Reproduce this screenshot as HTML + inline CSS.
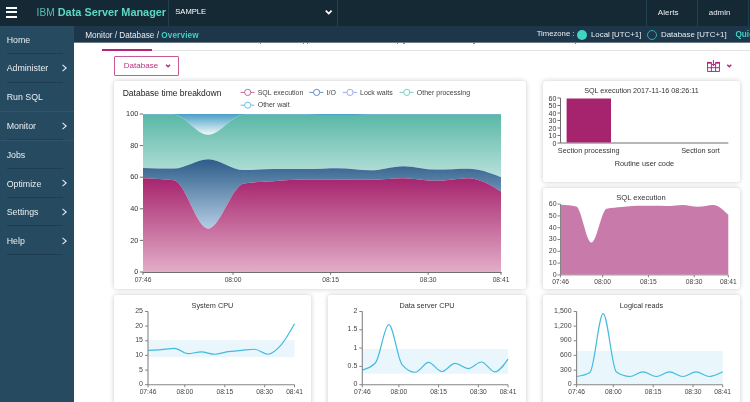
<!DOCTYPE html>
<html><head><meta charset="utf-8"><title>IBM Data Server Manager</title>
<style>
html,body{margin:0;padding:0}
body{width:750px;height:402px;overflow:hidden;background:#fff;font-family:"Liberation Sans", sans-serif;position:relative}
.abs{position:absolute}
#top{left:0;top:0;width:750px;height:26px;background:#152935}
#side{left:0;top:26px;width:74px;height:376px;background:#264a60}
#crumb{left:74px;top:26px;width:676px;height:16px;background:#1d3649}
.card{position:absolute;background:#fff;border-radius:3px;box-shadow:0 0 5px rgba(0,0,0,0.22)}
.nav{position:absolute;left:6.7px;color:#e8eef2;font-size:8.8px;line-height:10px;white-space:nowrap}
.sep{position:absolute;left:7px;width:56px;height:1px;background:#1e3d51}
.sepf{position:absolute;left:0;width:74px;height:1px;background:#31546a}
.vsep{position:absolute;top:0;width:1px;height:26px;background:#21404f}
.t{position:absolute;white-space:nowrap;line-height:10px}
svg text{font-family:"Liberation Sans", sans-serif}
</style></head><body>
<div id="wrap" style="position:absolute;left:0;top:0;width:750px;height:402px;overflow:hidden;will-change:transform">
<div class="abs" id="top"></div>
<div class="abs" id="side"></div>
<div class="abs" id="crumb"></div>
<div class="abs" style="left:74px;top:42px;width:676px;height:1px;background:#6c7c89"></div>

<!-- hamburger -->
<div class="abs" style="left:5.5px;top:6.7px;width:11.7px;height:2.3px;background:#fff"></div>
<div class="abs" style="left:5.5px;top:10.9px;width:11.7px;height:2.5px;background:#fff"></div>
<div class="abs" style="left:5.5px;top:15.5px;width:11.7px;height:2.5px;background:#fff"></div>

<div class="t" style="left:36.6px;top:5.9px;font-size:10.9px;line-height:12px;color:#5dd8c3"><span style="font-size:10.2px;color:#55bfb0">IBM</span> <b>Data Server Manager</b></div>
<div class="vsep" style="left:168px"></div>
<div class="t" style="left:175.3px;top:7.3px;font-size:7.6px;color:#fff">SAMPLE</div>
<svg class="abs" style="left:324px;top:8px" width="10" height="9" viewBox="0 0 10 9"><path d="M1.8,2.7L4.7,5.6L7.6,2.7" fill="none" stroke="#fff" stroke-width="1.7"/></svg>
<div class="vsep" style="left:337px"></div>
<div class="vsep" style="left:646px"></div>
<div class="vsep" style="left:697px"></div>
<div class="vsep" style="left:748px"></div>
<div class="t" style="left:657.8px;top:7.9px;font-size:8.1px;color:#e8eef2">Alerts</div>
<div class="t" style="left:708.8px;top:7.9px;font-size:7.9px;color:#e8eef2">admin</div>

<!-- breadcrumb -->
<div class="t" style="left:85.2px;top:31.2px;font-size:8.2px;color:#e8eef2">Monitor / Database / <b style="color:#3fd0c0;letter-spacing:0.15px">Overview</b></div>
<div class="t" style="left:536.7px;top:29.2px;font-size:7.7px;color:#e8eef2">Timezone :</div>
<div class="abs" style="left:577px;top:29.6px;width:10.2px;height:10.2px;border-radius:50%;background:#40d5c3"></div>
<div class="t" style="left:591px;top:30.2px;font-size:7.85px;color:#e8eef2">Local [UTC+1]</div>
<div class="abs" style="left:646.6px;top:29.8px;width:8.4px;height:8.4px;border-radius:50%;border:1px solid #2fae9f"></div>
<div class="t" style="left:661px;top:30.2px;font-size:7.9px;color:#e8eef2">Database [UTC+1]</div>
<div class="t" style="left:735.5px;top:29.8px;font-size:8.2px;color:#3fd0c0;font-weight:bold">Quick</div>

<!-- sidebar -->
<div class="nav" style="top:34.5px">Home</div><div class="nav" style="top:63.3px">Administer</div><div class="nav" style="top:92.1px">Run SQL</div><div class="nav" style="top:120.9px">Monitor</div><div class="nav" style="top:149.7px">Jobs</div><div class="nav" style="top:178.5px">Optimize</div><div class="nav" style="top:207.3px">Settings</div><div class="nav" style="top:236.1px">Help</div>
<div class="sep" style="top:53px"></div><div class="sep" style="top:82px"></div><div class="sep" style="top:168px"></div><div class="sep" style="top:197px"></div><div class="sep" style="top:225px"></div><div class="sep" style="top:254px"></div>
<div class="sepf" style="top:111px"></div><div class="sepf" style="top:140px"></div><div class="sep" style="top:139px"></div>
<svg class="abs" style="left:61px;top:64.1px" width="7" height="8" viewBox="0 0 7 8"><path d="M1.5,0.9L5.2,4L1.5,7.1" fill="none" stroke="#e8eef2" stroke-width="1.05"/></svg><svg class="abs" style="left:61px;top:121.7px" width="7" height="8" viewBox="0 0 7 8"><path d="M1.5,0.9L5.2,4L1.5,7.1" fill="none" stroke="#e8eef2" stroke-width="1.05"/></svg><svg class="abs" style="left:61px;top:179.3px" width="7" height="8" viewBox="0 0 7 8"><path d="M1.5,0.9L5.2,4L1.5,7.1" fill="none" stroke="#e8eef2" stroke-width="1.05"/></svg><svg class="abs" style="left:61px;top:208.1px" width="7" height="8" viewBox="0 0 7 8"><path d="M1.5,0.9L5.2,4L1.5,7.1" fill="none" stroke="#e8eef2" stroke-width="1.05"/></svg><svg class="abs" style="left:61px;top:236.9px" width="7" height="8" viewBox="0 0 7 8"><path d="M1.5,0.9L5.2,4L1.5,7.1" fill="none" stroke="#e8eef2" stroke-width="1.05"/></svg>

<!-- clipped marks -->
<div class="abs" style="left:259.5px;top:43px;width:1.5px;height:1px;background:#7f8b95"></div><div class="abs" style="left:302.5px;top:43px;width:1.5px;height:1px;background:#7f8b95"></div><div class="abs" style="left:306.5px;top:43px;width:1.5px;height:1px;background:#7f8b95"></div><div class="abs" style="left:396.5px;top:43px;width:1.5px;height:1px;background:#7f8b95"></div><div class="abs" style="left:403px;top:43px;width:1.5px;height:1px;background:#7f8b95"></div><div class="abs" style="left:473px;top:43px;width:1.5px;height:1px;background:#7f8b95"></div><div class="abs" style="left:574.5px;top:43px;width:1.5px;height:1px;background:#7f8b95"></div>
<!-- tabs line -->
<div class="abs" style="left:102px;top:49.6px;width:648px;height:1px;background:#e3e3e3"></div>
<div class="abs" style="left:102px;top:48.6px;width:50px;height:2px;background:#b5267b"></div>

<!-- database button -->
<div class="abs" style="left:114px;top:56px;width:63px;height:18px;border:1px solid #c85a98;border-radius:1px"></div>
<div class="t" style="left:123.8px;top:61px;font-size:8.05px;color:#b9307f">Database</div>
<svg class="abs" style="left:164px;top:62px" width="8" height="8" viewBox="0 0 8 8"><path d="M2.1,2.7L4.1,4.8L6.1,2.7" fill="none" stroke="#b5267b" stroke-width="1.3"/></svg>

<!-- layout icon -->
<svg class="abs" style="left:700px;top:54px" width="40" height="24" viewBox="0 0 40 24">
<g fill="none" stroke="#b0207a" stroke-width="0.95">
<path d="M11.4,8.6H7.55V17.45H19.45V8.6H15.6"/>
<path d="M7.6,13.7H19.4M11.4,8.6V17.4M15.6,8.6V17.4"/>
</g>
<rect x="7.1" y="7.9" width="4.3" height="1.7" fill="#b0207a"/>
<rect x="15.6" y="7.9" width="4.3" height="1.7" fill="#b0207a"/>
<path d="M13.45,6V11.6M11.9,9.9L13.45,11.7L15,9.9" fill="none" stroke="#b0207a" stroke-width="1"/>
<path d="M27.3,10.7L29.3,12.8L31.3,10.7" fill="none" stroke="#b0207a" stroke-width="1.3"/>
</svg>

<!-- cards -->
<div class="card" style="left:114px;top:81px;width:412px;height:208px"></div>
<div class="card" style="left:543px;top:81px;width:197px;height:101px"></div>
<div class="card" style="left:543px;top:188px;width:197px;height:101px"></div>
<div class="card" style="left:114px;top:295px;width:197px;height:120px"></div>
<div class="card" style="left:328px;top:295px;width:198px;height:120px"></div>
<div class="card" style="left:543px;top:295px;width:197px;height:120px"></div>

<svg class="abs" style="left:0;top:0" width="750" height="402" viewBox="0 0 750 402">
<defs>
<linearGradient id="gsql" x1="0" y1="0" x2="0" y2="1"><stop offset="0" stop-color="#a6246e"/><stop offset="1" stop-color="#e3adc8"/></linearGradient>
<linearGradient id="gio" x1="0" y1="0" x2="0" y2="1"><stop offset="0" stop-color="#2c5c88"/><stop offset="1" stop-color="#b4cde4"/></linearGradient>
<linearGradient id="gop" x1="0" y1="0" x2="0" y2="1"><stop offset="0" stop-color="#5ab8a6"/><stop offset="1" stop-color="#b9e1db"/></linearGradient>
<linearGradient id="gow" x1="0" y1="0" x2="0" y2="1"><stop offset="0" stop-color="#4a9fc6"/><stop offset="1" stop-color="#f2f9fc"/></linearGradient>
</defs>
<path d="M143.00,114.00C153.31,114.00,163.61,114.00,173.92,114.00C185.31,114.00,196.70,114.00,208.09,114.00C220.02,114.00,231.96,114.00,243.89,114.00C253.65,114.00,263.42,114.00,273.18,114.00C284.03,114.00,294.88,114.00,305.73,114.00C316.58,114.00,327.42,114.00,338.27,114.00C349.12,114.00,359.97,114.00,370.82,114.00C381.67,114.00,392.52,114.00,403.36,114.00C414.21,114.00,425.06,114.00,435.91,114.00C446.76,114.00,457.61,114.00,468.45,114.00C479.30,114.00,490.15,114.00,501.00,114.00L501.00,114.79C490.15,114.79,479.30,114.79,468.45,114.79C457.61,114.79,446.76,114.79,435.91,114.79C425.06,114.79,414.21,114.79,403.36,114.79C392.52,114.79,381.67,114.79,370.82,114.79C359.97,114.79,349.12,115.11,338.27,115.11C327.42,115.11,316.58,114.79,305.73,114.79C294.88,114.79,284.03,114.79,273.18,114.79C263.42,114.79,253.65,114.79,243.89,114.79C231.96,114.79,220.02,134.86,208.09,134.86C196.70,134.86,185.31,114.79,173.92,114.79C163.61,114.79,153.31,114.79,143.00,114.79Z" fill="url(#gow)"/>
<path d="M143.00,114.79C153.31,114.79,163.61,114.79,173.92,114.79C185.31,114.79,196.70,134.86,208.09,134.86C220.02,134.86,231.96,114.79,243.89,114.79C253.65,114.79,263.42,114.79,273.18,114.79C284.03,114.79,294.88,114.79,305.73,114.79C316.58,114.79,327.42,115.11,338.27,115.11C349.12,115.11,359.97,114.79,370.82,114.79C381.67,114.79,392.52,114.79,403.36,114.79C414.21,114.79,425.06,114.79,435.91,114.79C446.76,114.79,457.61,114.79,468.45,114.79C479.30,114.79,490.15,114.79,501.00,114.79L501.00,177.20C490.15,173.01,479.30,168.83,468.45,168.83C457.61,168.83,446.76,169.62,435.91,169.62C425.06,169.62,414.21,166.14,403.36,166.14C392.52,166.14,381.67,170.25,370.82,170.25C359.97,170.25,349.12,168.19,338.27,168.19C327.42,168.19,316.58,168.98,305.73,168.98C294.88,168.98,284.03,168.98,273.18,168.98C263.42,168.98,253.65,170.09,243.89,170.09C231.96,170.09,220.02,159.19,208.09,159.19C196.70,159.19,185.31,168.51,173.92,168.51C163.61,168.51,153.31,168.19,143.00,167.88Z" fill="url(#gop)"/>
<path d="M143.00,167.88C153.31,168.19,163.61,168.51,173.92,168.51C185.31,168.51,196.70,159.19,208.09,159.19C220.02,159.19,231.96,170.09,243.89,170.09C253.65,170.09,263.42,168.98,273.18,168.98C284.03,168.98,294.88,168.98,305.73,168.98C316.58,168.98,327.42,168.19,338.27,168.19C349.12,168.19,359.97,170.25,370.82,170.25C381.67,170.25,392.52,166.14,403.36,166.14C414.21,166.14,425.06,169.62,435.91,169.62C446.76,169.62,457.61,168.83,468.45,168.83C479.30,168.83,490.15,173.01,501.00,177.20L501.00,191.42C490.15,184.86,479.30,178.31,468.45,178.31C457.61,178.31,446.76,180.83,435.91,180.83C425.06,180.83,414.21,178.31,403.36,178.31C392.52,178.31,381.67,179.73,370.82,179.73C359.97,179.73,349.12,179.41,338.27,179.41C327.42,179.41,316.58,179.46,305.73,179.57C294.88,179.68,284.03,180.44,273.18,181.15C263.42,181.79,253.65,181.94,243.89,183.52C231.96,185.45,220.02,228.71,208.09,228.71C196.70,228.71,185.31,181.99,173.92,180.36C163.61,178.89,153.31,178.52,143.00,178.15Z" fill="url(#gio)"/>
<path d="M143.00,178.15C153.31,178.52,163.61,178.89,173.92,180.36C185.31,181.99,196.70,228.71,208.09,228.71C220.02,228.71,231.96,185.45,243.89,183.52C253.65,181.94,263.42,181.79,273.18,181.15C284.03,180.44,294.88,179.68,305.73,179.57C316.58,179.46,327.42,179.41,338.27,179.41C349.12,179.41,359.97,179.73,370.82,179.73C381.67,179.73,392.52,178.31,403.36,178.31C414.21,178.31,425.06,180.83,435.91,180.83C446.76,180.83,457.61,178.31,468.45,178.31C479.30,178.31,490.15,184.86,501.00,191.42L501.00,272.00C490.15,272.00,479.30,272.00,468.45,272.00C457.61,272.00,446.76,272.00,435.91,272.00C425.06,272.00,414.21,272.00,403.36,272.00C392.52,272.00,381.67,272.00,370.82,272.00C359.97,272.00,349.12,272.00,338.27,272.00C327.42,272.00,316.58,272.00,305.73,272.00C294.88,272.00,284.03,272.00,273.18,272.00C263.42,272.00,253.65,272.00,243.89,272.00C231.96,272.00,220.02,272.00,208.09,272.00C196.70,272.00,185.31,272.00,173.92,272.00C163.61,272.00,153.31,272.00,143.00,272.00Z" fill="url(#gsql)"/>
<path d="M142.5,272.5H501.5" stroke="#6e6e6e" stroke-width="1" fill="none"/>
<path d="M143.0,272.0v2.8" stroke="#6e6e6e" stroke-width="1"/>
<text x="143.0" y="282.2" font-size="6.7" text-anchor="middle" fill="#444" font-weight="normal" >07:46</text>
<path d="M233.0,272.0v2.8" stroke="#6e6e6e" stroke-width="1"/>
<text x="233.0" y="282.2" font-size="6.7" text-anchor="middle" fill="#444" font-weight="normal" >08:00</text>
<path d="M330.6,272.0v2.8" stroke="#6e6e6e" stroke-width="1"/>
<text x="330.6" y="282.2" font-size="6.7" text-anchor="middle" fill="#444" font-weight="normal" >08:15</text>
<path d="M428.2,272.0v2.8" stroke="#6e6e6e" stroke-width="1"/>
<text x="428.2" y="282.2" font-size="6.7" text-anchor="middle" fill="#444" font-weight="normal" >08:30</text>
<path d="M501.0,272.0v2.8" stroke="#6e6e6e" stroke-width="1"/>
<text x="501.0" y="282.2" font-size="6.7" text-anchor="middle" fill="#444" font-weight="normal" >08:41</text>
<path d="M139.8,272.0h3.2" stroke="#6e6e6e" stroke-width="1"/>
<text x="138.3" y="274.2" font-size="7.3" text-anchor="end" fill="#333" font-weight="normal" >0</text>
<path d="M139.8,240.4h3.2" stroke="#6e6e6e" stroke-width="1"/>
<text x="138.3" y="242.6" font-size="7.3" text-anchor="end" fill="#333" font-weight="normal" >20</text>
<path d="M139.8,208.8h3.2" stroke="#6e6e6e" stroke-width="1"/>
<text x="138.3" y="211.0" font-size="7.3" text-anchor="end" fill="#333" font-weight="normal" >40</text>
<path d="M139.8,177.2h3.2" stroke="#6e6e6e" stroke-width="1"/>
<text x="138.3" y="179.4" font-size="7.3" text-anchor="end" fill="#333" font-weight="normal" >60</text>
<path d="M139.8,145.6h3.2" stroke="#6e6e6e" stroke-width="1"/>
<text x="138.3" y="147.8" font-size="7.3" text-anchor="end" fill="#333" font-weight="normal" >80</text>
<path d="M139.8,114.0h3.2" stroke="#6e6e6e" stroke-width="1"/>
<text x="138.3" y="116.2" font-size="7.3" text-anchor="end" fill="#333" font-weight="normal" >100</text>
<text x="122.7" y="95.8" font-size="8.5" text-anchor="start" fill="#222" font-weight="normal" >Database time breakdown</text>
<path d="M240.5,92.4h14" stroke="#c25590" stroke-width="0.9"/><circle cx="247.7" cy="92.4" r="3.1" fill="#fff" stroke="#c25590" stroke-width="0.9"/>
<text x="257.7" y="95.0" font-size="7" text-anchor="start" fill="#444" font-weight="normal" >SQL execution</text>
<path d="M309.4,92.4h14" stroke="#4f84b5" stroke-width="0.9"/><circle cx="316.59999999999997" cy="92.4" r="3.1" fill="#fff" stroke="#4f84b5" stroke-width="0.9"/>
<text x="326.59999999999997" y="95.0" font-size="7" text-anchor="start" fill="#444" font-weight="normal" >I/O</text>
<path d="M342.8,92.4h14" stroke="#8f9ff5" stroke-width="0.9"/><circle cx="350.0" cy="92.4" r="3.1" fill="#fff" stroke="#8f9ff5" stroke-width="0.9"/>
<text x="360.0" y="95.0" font-size="7" text-anchor="start" fill="#444" font-weight="normal" >Lock waits</text>
<path d="M399.6,92.4h14" stroke="#6cc7b8" stroke-width="0.9"/><circle cx="406.8" cy="92.4" r="3.1" fill="#fff" stroke="#6cc7b8" stroke-width="0.9"/>
<text x="416.8" y="95.0" font-size="7" text-anchor="start" fill="#444" font-weight="normal" >Other processing</text>
<path d="M240.5,105.2h14" stroke="#62b6dc" stroke-width="0.9"/><circle cx="247.7" cy="105.2" r="3.1" fill="#fff" stroke="#62b6dc" stroke-width="0.9"/>
<text x="257.7" y="107.10000000000001" font-size="7" text-anchor="start" fill="#444" font-weight="normal" >Other wait</text>
<path d="M560.5,98.0V143.0H728.3" stroke="#6e6e6e" stroke-width="1" fill="none"/>
<path d="M557.5,143.0h3" stroke="#6e6e6e" stroke-width="1"/>
<text x="556.4" y="145.5" font-size="7" text-anchor="end" fill="#333" font-weight="normal" >0</text>
<path d="M557.5,135.5h3" stroke="#6e6e6e" stroke-width="1"/>
<text x="556.4" y="138.0" font-size="7" text-anchor="end" fill="#333" font-weight="normal" >10</text>
<path d="M557.5,128.0h3" stroke="#6e6e6e" stroke-width="1"/>
<text x="556.4" y="130.5" font-size="7" text-anchor="end" fill="#333" font-weight="normal" >20</text>
<path d="M557.5,120.5h3" stroke="#6e6e6e" stroke-width="1"/>
<text x="556.4" y="123.0" font-size="7" text-anchor="end" fill="#333" font-weight="normal" >30</text>
<path d="M557.5,113.0h3" stroke="#6e6e6e" stroke-width="1"/>
<text x="556.4" y="115.5" font-size="7" text-anchor="end" fill="#333" font-weight="normal" >40</text>
<path d="M557.5,105.5h3" stroke="#6e6e6e" stroke-width="1"/>
<text x="556.4" y="108.0" font-size="7" text-anchor="end" fill="#333" font-weight="normal" >50</text>
<path d="M557.5,98.0h3" stroke="#6e6e6e" stroke-width="1"/>
<text x="556.4" y="100.5" font-size="7" text-anchor="end" fill="#333" font-weight="normal" >60</text>
<rect x="566.6" y="98.5" width="44.4" height="44.0" fill="#a6246e"/>
<text x="641.5" y="93.4" font-size="7.2" text-anchor="middle" fill="#333" font-weight="normal" >SQL execution 2017-11-16 08:26:11</text>
<text x="588.7" y="153.2" font-size="7.3" text-anchor="middle" fill="#333" font-weight="normal" >Section processing</text>
<text x="700.5" y="153.2" font-size="7.3" text-anchor="middle" fill="#333" font-weight="normal" >Section sort</text>
<text x="644.4" y="166.4" font-size="7.3" text-anchor="middle" fill="#333" font-weight="normal" >Routine user code</text>
<path d="M560.5,204.1V274.9H728.3" stroke="#858585" stroke-width="1" fill="none"/>
<path d="M561.00,204.81C566.07,205.08,571.14,205.36,576.21,206.46C581.28,207.56,586.35,242.57,591.42,242.57C596.49,242.57,601.56,210.00,606.63,208.82C611.70,207.64,616.77,207.54,621.84,207.05C626.91,206.56,631.98,205.95,637.05,205.87C642.12,205.79,647.18,205.75,652.25,205.75C657.32,205.75,662.39,205.99,667.46,205.99C672.53,205.99,677.60,204.93,682.67,204.93C687.74,204.93,692.81,206.81,697.88,206.81C702.95,206.81,708.02,204.93,713.09,204.93C718.16,204.93,723.23,209.82,728.30,214.72L728.3,274.59999999999997L561.0,274.59999999999997Z" fill="#c87baa"/>
<path d="M557.5,274.9h3" stroke="#858585" stroke-width="1"/>
<text x="556.6" y="276.8" font-size="7" text-anchor="end" fill="#444" font-weight="normal" >0</text>
<path d="M557.5,263.1h3" stroke="#858585" stroke-width="1"/>
<text x="556.6" y="265.0" font-size="7" text-anchor="end" fill="#444" font-weight="normal" >10</text>
<path d="M557.5,251.3h3" stroke="#858585" stroke-width="1"/>
<text x="556.6" y="253.2" font-size="7" text-anchor="end" fill="#444" font-weight="normal" >20</text>
<path d="M557.5,239.5h3" stroke="#858585" stroke-width="1"/>
<text x="556.6" y="241.4" font-size="7" text-anchor="end" fill="#444" font-weight="normal" >30</text>
<path d="M557.5,227.7h3" stroke="#858585" stroke-width="1"/>
<text x="556.6" y="229.6" font-size="7" text-anchor="end" fill="#444" font-weight="normal" >40</text>
<path d="M557.5,215.9h3" stroke="#858585" stroke-width="1"/>
<text x="556.6" y="217.8" font-size="7" text-anchor="end" fill="#444" font-weight="normal" >50</text>
<path d="M557.5,204.1h3" stroke="#858585" stroke-width="1"/>
<text x="556.6" y="206.0" font-size="7" text-anchor="end" fill="#444" font-weight="normal" >60</text>
<path d="M560.5,274.9v2.4" stroke="#858585" stroke-width="1"/>
<text x="560.5" y="284.4" font-size="6.7" text-anchor="middle" fill="#444" font-weight="normal" >07:46</text>
<path d="M602.7,274.9v2.4" stroke="#858585" stroke-width="1"/>
<text x="602.7" y="284.4" font-size="6.7" text-anchor="middle" fill="#444" font-weight="normal" >08:00</text>
<path d="M648.4,274.9v2.4" stroke="#858585" stroke-width="1"/>
<text x="648.4" y="284.4" font-size="6.7" text-anchor="middle" fill="#444" font-weight="normal" >08:15</text>
<path d="M694.2,274.9v2.4" stroke="#858585" stroke-width="1"/>
<text x="694.2" y="284.4" font-size="6.7" text-anchor="middle" fill="#444" font-weight="normal" >08:30</text>
<path d="M728.3,274.9v2.4" stroke="#858585" stroke-width="1"/>
<text x="728.3" y="284.4" font-size="6.7" text-anchor="middle" fill="#444" font-weight="normal" >08:41</text>
<text x="641" y="200.0" font-size="7.6" text-anchor="middle" fill="#333" font-weight="normal" >SQL execution</text>
<rect x="148" y="340.2" width="146.5" height="17.0" fill="#e9f6fc"/>
<path d="M148.00,350.44C152.44,350.17,156.88,349.91,161.32,349.56C165.76,349.22,170.20,348.39,174.64,348.39C179.08,348.39,183.52,353.66,187.95,353.66C192.39,353.66,196.83,351.91,201.27,351.91C205.71,351.91,210.15,354.25,214.59,354.25C219.03,354.25,223.47,352.25,227.91,351.61C232.35,350.98,236.79,350.83,241.23,350.44C245.67,350.05,250.11,349.27,254.55,349.27C258.98,349.27,263.42,354.25,267.86,354.25C272.30,354.25,276.74,349.95,281.18,344.88C285.62,339.80,290.06,331.80,294.50,323.80" fill="none" stroke="#43bae0" stroke-width="1.2"/>
<path d="M148,311.5V384.7H294.5" stroke="#858585" stroke-width="1.1" fill="none"/>
<path d="M145,384.7h3" stroke="#858585" stroke-width="1"/>
<text x="143.0" y="386.3" font-size="7" text-anchor="end" fill="#444" font-weight="normal" >0</text>
<path d="M145,370.1h3" stroke="#858585" stroke-width="1"/>
<text x="143.0" y="371.7" font-size="7" text-anchor="end" fill="#444" font-weight="normal" >5</text>
<path d="M145,355.4h3" stroke="#858585" stroke-width="1"/>
<text x="143.0" y="357.0" font-size="7" text-anchor="end" fill="#444" font-weight="normal" >10</text>
<path d="M145,340.8h3" stroke="#858585" stroke-width="1"/>
<text x="143.0" y="342.4" font-size="7" text-anchor="end" fill="#444" font-weight="normal" >15</text>
<path d="M145,326.1h3" stroke="#858585" stroke-width="1"/>
<text x="143.0" y="327.7" font-size="7" text-anchor="end" fill="#444" font-weight="normal" >20</text>
<path d="M145,311.5h3" stroke="#858585" stroke-width="1"/>
<text x="143.0" y="313.1" font-size="7" text-anchor="end" fill="#444" font-weight="normal" >25</text>
<path d="M148.0,384.7v2.6" stroke="#858585" stroke-width="1"/>
<text x="148.0" y="393.7" font-size="6.7" text-anchor="middle" fill="#444" font-weight="normal" >07:46</text>
<path d="M184.8,384.7v2.6" stroke="#858585" stroke-width="1"/>
<text x="184.8" y="393.7" font-size="6.7" text-anchor="middle" fill="#444" font-weight="normal" >08:00</text>
<path d="M224.8,384.7v2.6" stroke="#858585" stroke-width="1"/>
<text x="224.8" y="393.7" font-size="6.7" text-anchor="middle" fill="#444" font-weight="normal" >08:15</text>
<path d="M264.7,384.7v2.6" stroke="#858585" stroke-width="1"/>
<text x="264.7" y="393.7" font-size="6.7" text-anchor="middle" fill="#444" font-weight="normal" >08:30</text>
<path d="M294.5,384.7v2.6" stroke="#858585" stroke-width="1"/>
<text x="294.5" y="393.7" font-size="6.7" text-anchor="middle" fill="#444" font-weight="normal" >08:41</text>
<text x="212.5" y="307.8" font-size="7.3" text-anchor="middle" fill="#333" font-weight="normal" >System CPU</text>
<rect x="362.3" y="349.0" width="145.7" height="24.7" fill="#e9f6fc"/>
<path d="M362.30,370.06C366.72,368.84,371.13,367.62,375.55,362.74C379.96,357.86,384.38,324.68,388.79,324.68C393.21,324.68,397.62,359.45,402.04,364.57C406.45,369.69,410.87,372.26,415.28,372.26C419.70,372.26,424.11,362.37,428.53,362.37C432.94,362.37,437.36,371.52,441.77,371.52C446.19,371.52,450.60,363.47,455.02,363.47C459.43,363.47,463.85,368.60,468.26,368.60C472.68,368.60,477.09,362.01,481.51,362.01C485.92,362.01,490.34,371.89,494.75,371.89C499.17,371.89,503.58,365.49,508.00,359.08" fill="none" stroke="#43bae0" stroke-width="1.2"/>
<path d="M362.3,311.5V384.7H508" stroke="#858585" stroke-width="1.1" fill="none"/>
<path d="M359.3,384.7h3" stroke="#858585" stroke-width="1"/>
<text x="357.3" y="386.3" font-size="7" text-anchor="end" fill="#444" font-weight="normal" >0</text>
<path d="M359.3,366.4h3" stroke="#858585" stroke-width="1"/>
<text x="357.3" y="368.0" font-size="7" text-anchor="end" fill="#444" font-weight="normal" >0.5</text>
<path d="M359.3,348.1h3" stroke="#858585" stroke-width="1"/>
<text x="357.3" y="349.7" font-size="7" text-anchor="end" fill="#444" font-weight="normal" >1</text>
<path d="M359.3,329.8h3" stroke="#858585" stroke-width="1"/>
<text x="357.3" y="331.4" font-size="7" text-anchor="end" fill="#444" font-weight="normal" >1.5</text>
<path d="M359.3,311.5h3" stroke="#858585" stroke-width="1"/>
<text x="357.3" y="313.1" font-size="7" text-anchor="end" fill="#444" font-weight="normal" >2</text>
<path d="M362.3,384.7v2.6" stroke="#858585" stroke-width="1"/>
<text x="362.3" y="393.7" font-size="6.7" text-anchor="middle" fill="#444" font-weight="normal" >07:46</text>
<path d="M398.9,384.7v2.6" stroke="#858585" stroke-width="1"/>
<text x="398.9" y="393.7" font-size="6.7" text-anchor="middle" fill="#444" font-weight="normal" >08:00</text>
<path d="M438.6,384.7v2.6" stroke="#858585" stroke-width="1"/>
<text x="438.6" y="393.7" font-size="6.7" text-anchor="middle" fill="#444" font-weight="normal" >08:15</text>
<path d="M478.4,384.7v2.6" stroke="#858585" stroke-width="1"/>
<text x="478.4" y="393.7" font-size="6.7" text-anchor="middle" fill="#444" font-weight="normal" >08:30</text>
<path d="M508.0,384.7v2.6" stroke="#858585" stroke-width="1"/>
<text x="508.0" y="393.7" font-size="6.7" text-anchor="middle" fill="#444" font-weight="normal" >08:41</text>
<text x="427" y="307.8" font-size="7.3" text-anchor="middle" fill="#333" font-weight="normal" >Data server CPU</text>
<rect x="576.6" y="351.0" width="146.1" height="33.7" fill="#e9f6fc"/>
<path d="M576.60,376.50C581.03,375.83,585.45,375.17,589.88,372.50C594.31,369.83,598.74,313.55,603.16,313.55C607.59,313.55,612.02,369.18,616.45,372.11C620.87,375.04,625.30,376.50,629.73,376.50C634.15,376.50,638.58,371.82,643.01,371.82C647.44,371.82,651.86,376.50,656.29,376.50C660.72,376.50,665.15,371.82,669.57,371.82C674.00,371.82,678.43,376.50,682.85,376.50C687.28,376.50,691.71,371.82,696.14,371.82C700.56,371.82,704.99,376.50,709.42,376.50C713.85,376.50,718.27,374.16,722.70,371.82" fill="none" stroke="#43bae0" stroke-width="1.2"/>
<path d="M576.6,311.5V384.7H722.7" stroke="#858585" stroke-width="1.1" fill="none"/>
<path d="M573.6,384.7h3" stroke="#858585" stroke-width="1"/>
<text x="571.6" y="386.3" font-size="7" text-anchor="end" fill="#444" font-weight="normal" >0</text>
<path d="M573.6,370.1h3" stroke="#858585" stroke-width="1"/>
<text x="571.6" y="371.7" font-size="7" text-anchor="end" fill="#444" font-weight="normal" >300</text>
<path d="M573.6,355.4h3" stroke="#858585" stroke-width="1"/>
<text x="571.6" y="357.0" font-size="7" text-anchor="end" fill="#444" font-weight="normal" >600</text>
<path d="M573.6,340.8h3" stroke="#858585" stroke-width="1"/>
<text x="571.6" y="342.4" font-size="7" text-anchor="end" fill="#444" font-weight="normal" >900</text>
<path d="M573.6,326.1h3" stroke="#858585" stroke-width="1"/>
<text x="571.6" y="327.7" font-size="7" text-anchor="end" fill="#444" font-weight="normal" >1,200</text>
<path d="M573.6,311.5h3" stroke="#858585" stroke-width="1"/>
<text x="571.6" y="313.1" font-size="7" text-anchor="end" fill="#444" font-weight="normal" >1,500</text>
<path d="M576.6,384.7v2.6" stroke="#858585" stroke-width="1"/>
<text x="576.6" y="393.7" font-size="6.7" text-anchor="middle" fill="#444" font-weight="normal" >07:46</text>
<path d="M613.3,384.7v2.6" stroke="#858585" stroke-width="1"/>
<text x="613.3" y="393.7" font-size="6.7" text-anchor="middle" fill="#444" font-weight="normal" >08:00</text>
<path d="M653.2,384.7v2.6" stroke="#858585" stroke-width="1"/>
<text x="653.2" y="393.7" font-size="6.7" text-anchor="middle" fill="#444" font-weight="normal" >08:15</text>
<path d="M693.0,384.7v2.6" stroke="#858585" stroke-width="1"/>
<text x="693.0" y="393.7" font-size="6.7" text-anchor="middle" fill="#444" font-weight="normal" >08:30</text>
<path d="M722.7,384.7v2.6" stroke="#858585" stroke-width="1"/>
<text x="722.7" y="393.7" font-size="6.7" text-anchor="middle" fill="#444" font-weight="normal" >08:41</text>
<text x="641.5" y="307.8" font-size="7.3" text-anchor="middle" fill="#333" font-weight="normal" >Logical reads</text>
</svg>
</div>
</body></html>
